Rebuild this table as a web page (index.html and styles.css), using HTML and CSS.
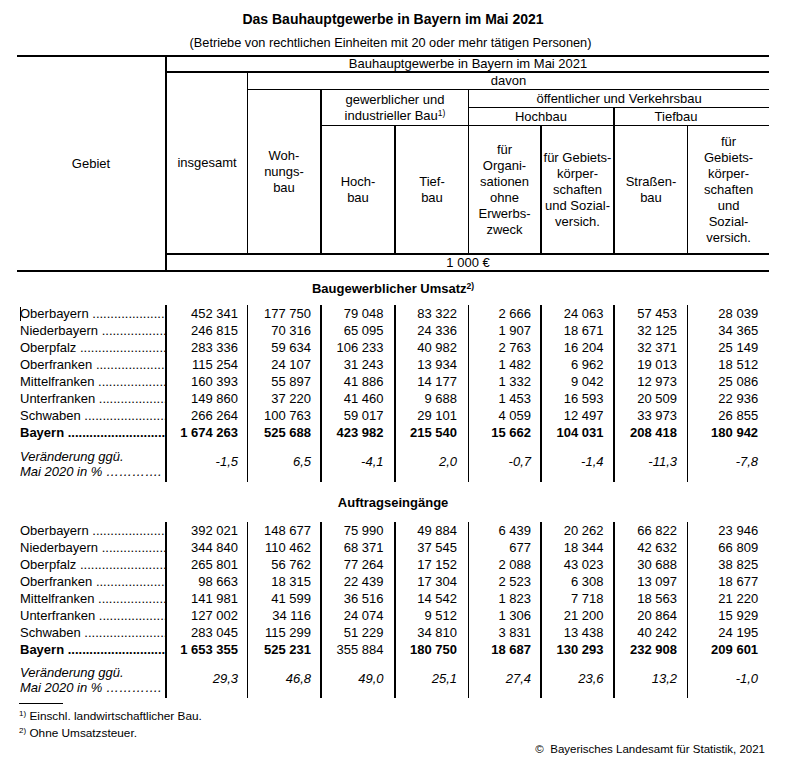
FILE: index.html
```
<!DOCTYPE html>
<html lang="de">
<head>
<meta charset="utf-8">
<title>Das Bauhauptgewerbe in Bayern im Mai 2021</title>
<link rel="stylesheet" href="styles.css">
</head>
<body>
<div class="page">
  <h1 class="title">Das Bauhauptgewerbe in Bayern im Mai 2021</h1>
  <p class="subtitle">(Betriebe von rechtlichen Einheiten mit 20 oder mehr tätigen Personen)</p>
  <table class="stat">
    <colgroup>
      <col><col><col><col><col><col><col><col><col>
    </colgroup>
    <thead>
      <tr class="hr1">
        <th rowspan="6" class="top2">Gebiet</th>
        <th colspan="8" class="top2 v2">Bauhauptgewerbe in Bayern im Mai 2021</th>
      </tr>
      <tr class="hr2">
        <th rowspan="4" class="top2 v2">insgesamt</th>
        <th colspan="7" class="top2 v1">davon</th>
      </tr>
      <tr class="hr3">
        <th rowspan="3" class="top1 v1">Woh-<br>nungs-<br>bau</th>
        <th rowspan="2" colspan="2" class="top1 v2">gewerblicher und<br>industrieller Bau<sup>1)</sup></th>
        <th colspan="4" class="top1 v1">öffentlicher und Verkehrsbau</th>
      </tr>
      <tr class="hr4">
        <th colspan="2" class="top1 v1">Hochbau</th>
        <th colspan="2" class="top1 v2 tief">Tiefbau</th>
      </tr>
      <tr class="hr5">
        <th class="top1 v2">Hoch-<br>bau</th>
        <th class="top1 v2">Tief-<br>bau</th>
        <th class="top1 v1">für<br>Organi-<br>sationen<br>ohne<br>Erwerbs-<br>zweck</th>
        <th class="top1 v2">für Gebiets-<br>körper-<br>schaften<br>und Sozial-<br>versich.</th>
        <th class="top1 v2">Straßen-<br>bau</th>
        <th class="top1 v1">für<br>Gebiets-<br>körper-<br>schaften<br>und<br>Sozial-<br>versich.</th>
      </tr>
      <tr class="hr6">
        <th colspan="8" class="top2 v2">1 000 €</th>
      </tr>
    </thead>
    <tbody>
      <tr class="sec sec1"><td colspan="9">Baugewerblicher Umsatz<sup>2)</sup></td></tr>
      <tr class="d"><td class="lab"><span class="caret" aria-hidden="true"></span>Oberbayern</td><td>452 341</td><td>177 750</td><td>79 048</td><td>83 322</td><td>2 666</td><td>24 063</td><td>57 453</td><td>28 039</td></tr>
      <tr class="d"><td class="lab">Niederbayern</td><td>246 815</td><td>70 316</td><td>65 095</td><td>24 336</td><td>1 907</td><td>18 671</td><td>32 125</td><td>34 365</td></tr>
      <tr class="d"><td class="lab">Oberpfalz</td><td>283 336</td><td>59 634</td><td>106 233</td><td>40 982</td><td>2 763</td><td>16 204</td><td>32 371</td><td>25 149</td></tr>
      <tr class="d"><td class="lab">Oberfranken</td><td>115 254</td><td>24 107</td><td>31 243</td><td>13 934</td><td>1 482</td><td>6 962</td><td>19 013</td><td>18 512</td></tr>
      <tr class="d"><td class="lab">Mittelfranken</td><td>160 393</td><td>55 897</td><td>41 886</td><td>14 177</td><td>1 332</td><td>9 042</td><td>12 973</td><td>25 086</td></tr>
      <tr class="d"><td class="lab">Unterfranken</td><td>149 860</td><td>37 220</td><td>41 460</td><td>9 688</td><td>1 453</td><td>16 593</td><td>20 509</td><td>22 936</td></tr>
      <tr class="d"><td class="lab">Schwaben</td><td>266 264</td><td>100 763</td><td>59 017</td><td>29 101</td><td>4 059</td><td>12 497</td><td>33 973</td><td>26 855</td></tr>
      <tr class="d tot"><td class="lab">Bayern</td><td>1 674 263</td><td>525 688</td><td>423 982</td><td>215 540</td><td>15 662</td><td>104 031</td><td>208 418</td><td>180 942</td></tr>
      <tr class="d chg chg1"><td class="clab">Veränderung ggü.<br>Mai 2020 in % ………….</td><td>-1,5</td><td>6,5</td><td>-4,1</td><td>2,0</td><td>-0,7</td><td>-1,4</td><td>-11,3</td><td>-7,8</td></tr>
      <tr class="sec sec2"><td colspan="9">Auftragseingänge</td></tr>
      <tr class="d"><td class="lab">Oberbayern</td><td>392 021</td><td>148 677</td><td>75 990</td><td>49 884</td><td>6 439</td><td>20 262</td><td>66 822</td><td>23 946</td></tr>
      <tr class="d"><td class="lab">Niederbayern</td><td>344 840</td><td>110 462</td><td>68 371</td><td>37 545</td><td>677</td><td>18 344</td><td>42 632</td><td>66 809</td></tr>
      <tr class="d"><td class="lab">Oberpfalz</td><td>265 801</td><td>56 762</td><td>77 264</td><td>17 152</td><td>2 088</td><td>43 023</td><td>30 688</td><td>38 825</td></tr>
      <tr class="d"><td class="lab">Oberfranken</td><td>98 663</td><td>18 315</td><td>22 439</td><td>17 304</td><td>2 523</td><td>6 308</td><td>13 097</td><td>18 677</td></tr>
      <tr class="d"><td class="lab">Mittelfranken</td><td>141 981</td><td>41 599</td><td>36 516</td><td>14 542</td><td>1 823</td><td>7 718</td><td>18 563</td><td>21 220</td></tr>
      <tr class="d"><td class="lab">Unterfranken</td><td>127 002</td><td>34 116</td><td>24 074</td><td>9 512</td><td>1 306</td><td>21 200</td><td>20 864</td><td>15 929</td></tr>
      <tr class="d"><td class="lab">Schwaben</td><td>283 045</td><td>115 299</td><td>51 229</td><td>34 810</td><td>3 831</td><td>13 438</td><td>40 242</td><td>24 195</td></tr>
      <tr class="d tot"><td class="lab">Bayern</td><td>1 653 355</td><td>525 231</td><td class="reg">355 884</td><td>180 750</td><td>18 687</td><td>130 293</td><td>232 908</td><td>209 601</td></tr>
      <tr class="d chg chg2"><td class="clab">Veränderung ggü.<br>Mai 2020 in % ………….</td><td>29,3</td><td>46,8</td><td>49,0</td><td>25,1</td><td>27,4</td><td>23,6</td><td>13,2</td><td>-1,0</td></tr>
    </tbody>
  </table>
  <div class="rule"></div>
  <p class="fn"><sup>1)</sup> Einschl. landwirtschaftlicher Bau.</p>
  <p class="fn"><sup>2)</sup> Ohne Umsatzsteuer.</p>
  <p class="copy">©&nbsp; Bayerisches Landesamt für Statistik, 2021</p>
</div>
</body>
</html>
```

FILE: styles.css
```
* { box-sizing: border-box; }

body {
  margin: 0;
  background: #fff;
  color: #000;
  font-family: "Liberation Sans", Arial, sans-serif;
}

.page {
  width: 752px;
  margin-left: 17px;
}

.title {
  margin: 0;
  padding-top: 11px;
  font-size: 14px;
  line-height: 16px;
  font-weight: bold;
  text-align: center;
}

.subtitle {
  margin: 8px 0 0;
  padding-right: 5px;
  font-size: 12.75px;
  line-height: 16px;
  text-align: center;
}

.stat {
  width: 752px;
  margin-top: 4px;
  table-layout: fixed;
  border-collapse: separate;
  border-spacing: 0;
  font-size: 13px;
}

.stat col:nth-child(1) { width: 148px; }
.stat col:nth-child(2) { width: 82px; }
.stat col:nth-child(3) { width: 73px; }
.stat col:nth-child(4) { width: 74px; }
.stat col:nth-child(5) { width: 74px; }
.stat col:nth-child(6) { width: 72px; }
.stat col:nth-child(7) { width: 73px; }
.stat col:nth-child(8) { width: 74px; }
.stat col:nth-child(9) { width: 82px; }

.stat th,
.stat td {
  padding: 0;
  white-space: nowrap;
}

.stat th {
  font-weight: normal;
  text-align: center;
  vertical-align: middle;
  line-height: 16px;
}

.top2 { border-top: 2px solid #000; }
.top1 { border-top: 1px solid #000; }
.v2 { border-left: 2px solid #000; }
.v1 { border-left: 1px solid #000; }

.hr1 { height: 16px; }
.hr1 th { line-height: 14px; }
.hr2 { height: 18px; }
.hr3 { height: 18px; }
.hr4 { height: 18px; }
.hr5 { height: 128px; }
.hr6 { height: 17px; }
.hr6 th { line-height: 15px; }

.tief { padding-right: 32px !important; }

sup {
  font-size: 8.5px;
  line-height: 0;
  vertical-align: 4px;
}

/* section headings */
.sec td {
  font-weight: bold;
  text-align: center;
  vertical-align: top;
  line-height: 16px;
}
.sec1 { height: 35px; }
.sec1 td { border-top: 2px solid #000; padding-top: 9px; }
.sec2 { height: 40px; }
.sec2 td { padding-top: 13px; }

/* data rows */
.d { height: 17px; }
.d td {
  line-height: 17px;
  text-align: right;
  vertical-align: middle;
  padding-right: 9.5px;
}
.d td:nth-child(2),
.d td:nth-child(4),
.d td:nth-child(5),
.d td:nth-child(7),
.d td:nth-child(8) { border-left: 2px solid #000; }
.d td:nth-child(3),
.d td:nth-child(6),
.d td:nth-child(9) { border-left: 1px solid #000; }

.d td:nth-child(2) { padding-right: 9px; }
.d td:nth-child(3) { padding-right: 9px; }
.d td:nth-child(4) { padding-right: 10.5px; }
.d td:nth-child(5) { padding-right: 11px; }
.d td:nth-child(6) { padding-right: 9px; }
.d td:nth-child(8) { padding-right: 10px; }
.d td:nth-child(9) { padding-right: 11px; }

.d td.lab,
.d td.clab {
  text-align: left;
  padding-left: 3px;
  padding-right: 2px;
  overflow: hidden;
}

.lab::after {
  content: " .............................................................";
}

.tot td { font-weight: bold; }
.tot td.reg { font-weight: normal; }

.caret {
  display: inline-block;
  width: 1px;
  height: 14px;
  margin-right: -1px;
  background: #000;
  vertical-align: -3px;
}

.chg td { font-style: italic; }
.chg1 { height: 41px; }
.chg2 { height: 40px; }
.d td.clab {
  vertical-align: bottom;
  line-height: 15px;
  padding-bottom: 3px;
}

/* footer */
.rule {
  width: 44px;
  margin: 5px 0 0 2px;
  border-top: 1px solid #000;
}

.fn {
  margin: 0;
  padding-left: 2px;
  font-size: 11.8px;
  line-height: 17px;
}
.rule + .fn { margin-top: 4px; }
.fn sup { font-size: 8px; }

.copy {
  margin: 0;
  padding-right: 4px;
  font-size: 11.5px;
  line-height: 14px;
  text-align: right;
}
```
